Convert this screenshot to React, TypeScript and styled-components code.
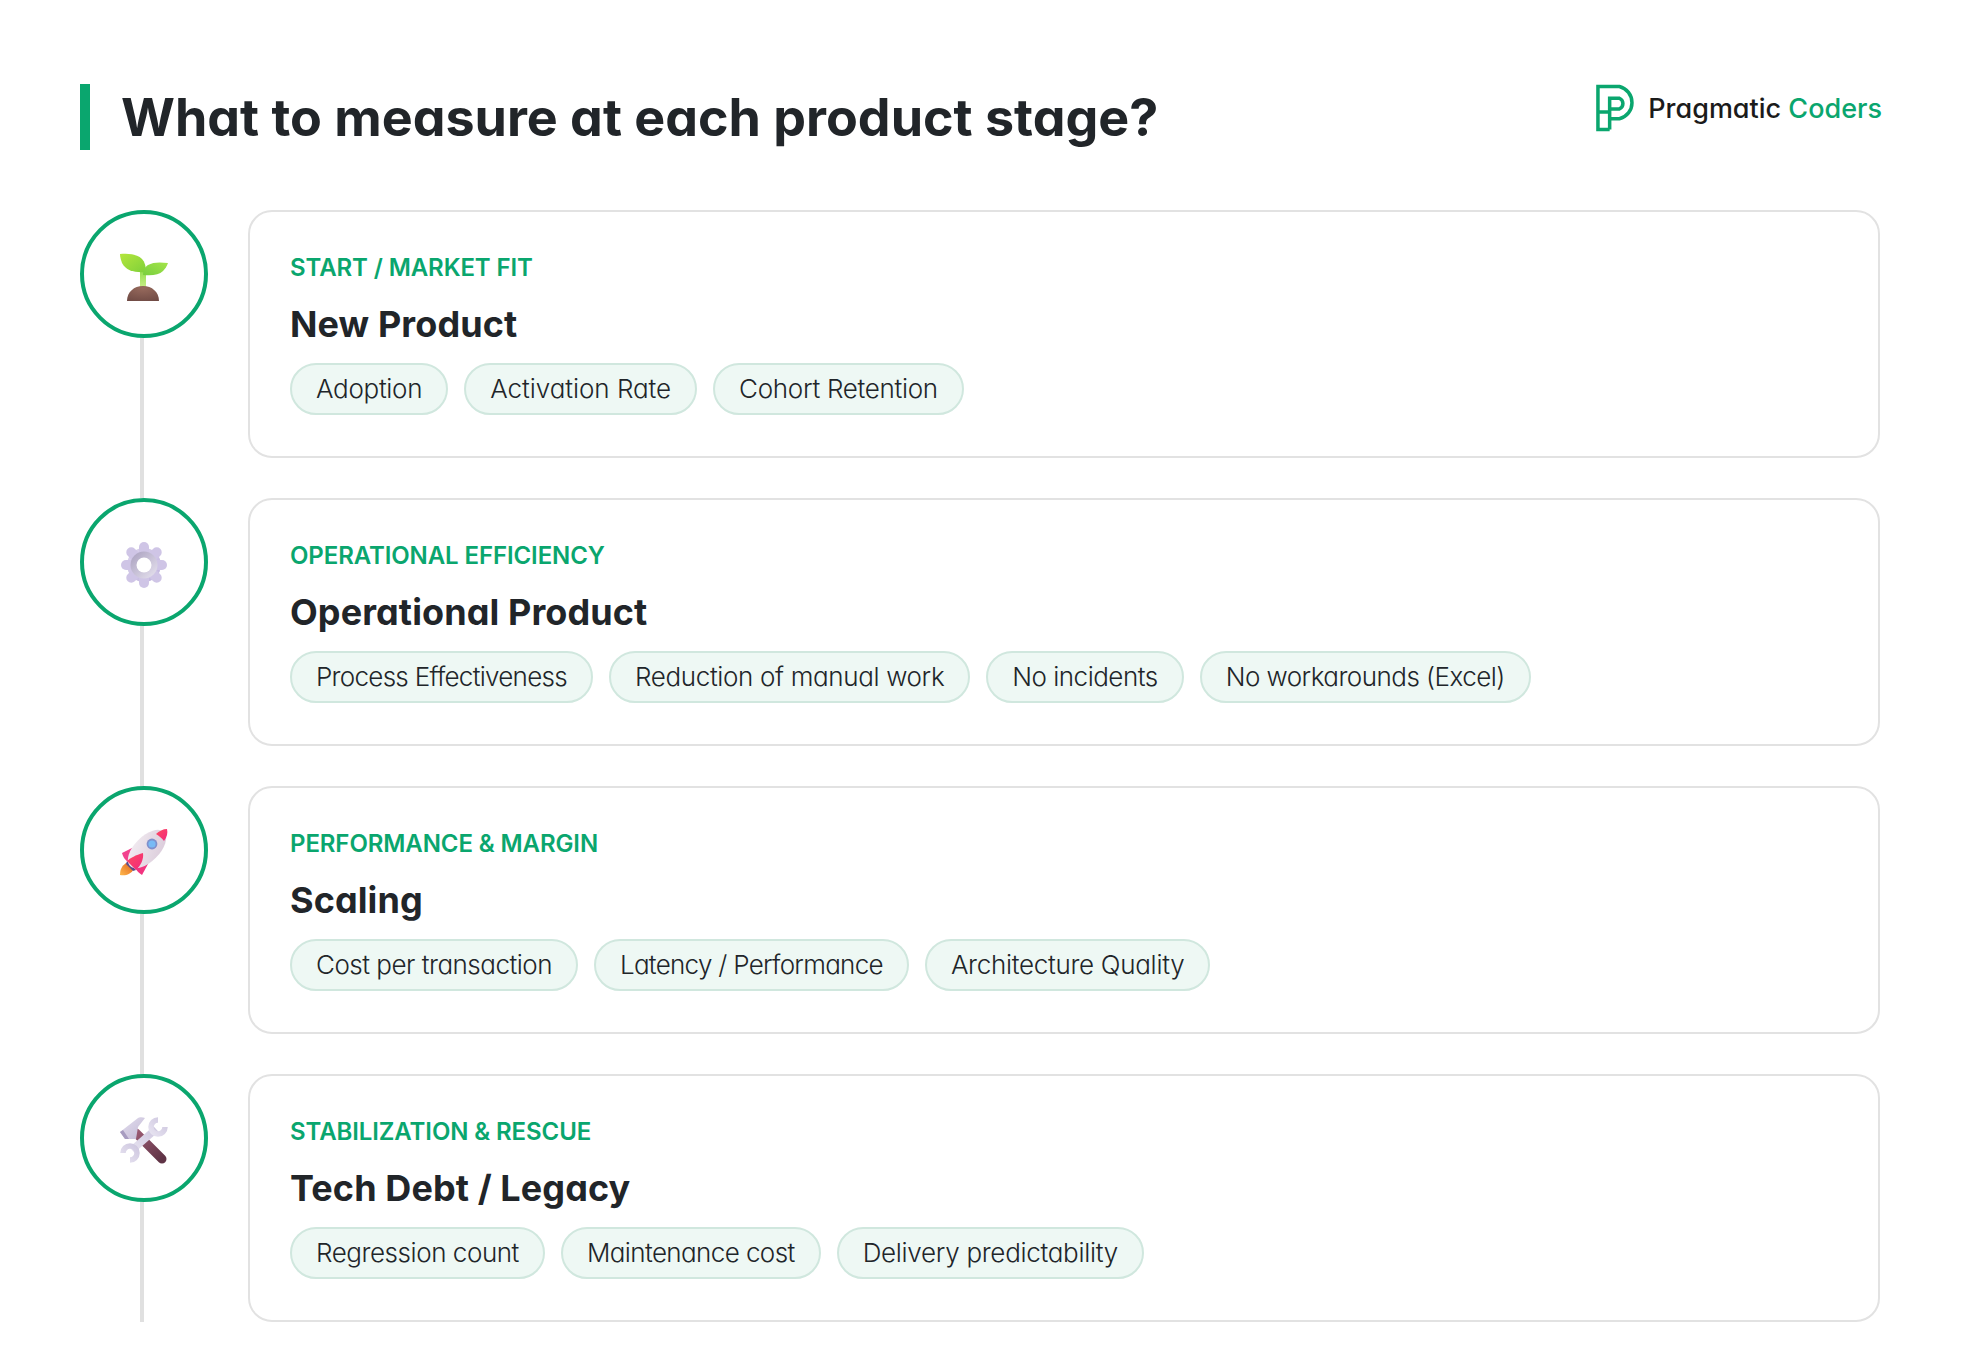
import React from 'react';
import styled, { createGlobalStyle } from 'styled-components';

const Global = createGlobalStyle`
  html, body { margin: 0; padding: 0; background: #fff; }
  body { font-family: "Inter", "Lato", sans-serif; font-feature-settings: "cv11" 1; color: #1f2326; }
`;

const Page = styled.div`
  width: 1962px;
  height: 1372px;
  box-sizing: border-box;
  padding: 84px 82px 50px 80px;
`;

const Header = styled.header`
  display: flex;
  justify-content: space-between;
  align-items: flex-start;
  margin-bottom: 60px;
`;

const Title = styled.h1`
  margin: 0;
  height: 66px;
  box-sizing: border-box;
  border-left: 10px solid #0aa66e;
  padding-left: 31px;
  font-size: 52px;
  line-height: 68px;
  font-weight: 700;
  color: #212529;
`;

const Logo = styled.div`
  display: flex;
  align-items: center;
  gap: 13px;
  height: 48px;
  margin-right: -2px;
`;

const LogoText = styled.div`
  font-size: 27px;
  font-weight: 500;
  color: #1b1b1b;
  white-space: nowrap;
  span { color: #0aa66e; }
`;

const Row = styled.section`
  display: flex;
`;

const Rail = styled.div`
  width: 168px;
  flex: none;
  display: flex;
  flex-direction: column;
`;

const Circle = styled.div`
  width: 128px;
  height: 128px;
  box-sizing: border-box;
  border: 4px solid #0aa66e;
  border-radius: 50%;
  padding-top: 5px;
  display: flex;
  align-items: center;
  justify-content: center;
  flex: none;
`;

const Connector = styled.div`
  width: 4px;
  flex: 1;
  margin-left: 60px;
  background: #e0e0e0;
`;

const Card = styled.article<{ $last?: boolean }>`
  flex: 1;
  height: 248px;
  box-sizing: border-box;
  margin-bottom: ${(p) => (p.$last ? 0 : 40)}px;
  border: 2px solid #e2e2e2;
  border-radius: 24px;
  padding: 41px 40px 0;
`;

const Eyebrow = styled.div`
  font-size: 24px;
  line-height: 30px;
  font-weight: 600;
  color: #0aa66e;
  letter-spacing: -0.1px;
`;

const CardTitle = styled.h2`
  margin: 18px 0 0;
  font-size: 36px;
  line-height: 46px;
  font-weight: 700;
  color: #212529;
  letter-spacing: 0.1px;
`;

const Chips = styled.div`
  display: flex;
  gap: 16px;
  margin-top: 16px;
`;

const Chip = styled.span<{ $track: number }>`
  height: 52px;
  box-sizing: border-box;
  padding: 0 24px;
  border: 2px solid #d0e7de;
  border-radius: 26px;
  background: #eef8f4;
  font-size: 26px;
  line-height: 48px;
  font-weight: 350;
  color: #212529;
  white-space: nowrap;
  letter-spacing: ${(p) => p.$track}px;
`;

const Seedling = () => (
  <svg width="48" height="48" viewBox="0 0 48 48">
    <defs>
      <linearGradient id="sl" x1="0" y1="0" x2="1" y2="1"><stop offset="0" stopColor="#b4e63c" /><stop offset="1" stopColor="#7fd03a" /></linearGradient>
      <linearGradient id="sr" x1="1" y1="0" x2="0" y2="1"><stop offset="0" stopColor="#a4e44a" /><stop offset="1" stopColor="#78cf3e" /></linearGradient>
      <linearGradient id="ss" x1="0" y1="0" x2="0" y2="1"><stop offset="0" stopColor="#8ddc46" /><stop offset="1" stopColor="#cdf08c" /></linearGradient>
      <radialGradient id="sd" cx=".5" cy=".15" r=".95"><stop offset="0" stopColor="#96695c" /><stop offset="1" stopColor="#6f4a44" /></radialGradient>
    </defs>
    <path d="M20 16v20h6V16z" fill="url(#ss)" />
    <path d="M0 1c8-1 17 0 22 5 3 3 4 8 4 13C16 20 6 18 2 10 1 7 0 4 0 1z" fill="url(#sl)" />
    <path d="M48 10c-8-1-15-1-20 2-3 2-5 5-5 10 9 1 16 0 20-4 2-2 4-5 5-8z" fill="url(#sr)" />
    <path d="M7 48c0-9 7-15 16-15s16 6 16 15z" fill="url(#sd)" />
  </svg>
);

const Gear = () => {
  const teeth = [0, 45, 90, 135, 180, 225, 270, 315];
  return (
    <svg width="48" height="48" viewBox="0 0 48 48">
      <defs>
        <linearGradient id="gb" x1="0" y1="0" x2="1" y2="1"><stop offset="0" stopColor="#dcd4ec" /><stop offset="1" stopColor="#c0b4de" /></linearGradient>
        <linearGradient id="gr" x1="0" y1="0" x2="1" y2="1"><stop offset="0" stopColor="#a89fbe" /><stop offset="1" stopColor="#e8e4f0" /></linearGradient>
      </defs>
      <circle cx="24" cy="24" r="17" fill="url(#gb)" />
      {teeth.map((a) => (
        <rect key={a} x="19" y="1" width="10" height="16" rx="5" fill="#cfc5e6" transform={`rotate(${a} 24 24)`} />
      ))}
      <circle cx="24" cy="24" r="13.5" fill="url(#gr)" />
      <circle cx="24" cy="24" r="7.5" fill="#fff" />
    </svg>
  );
};

const Rocket = () => (
  <svg width="48" height="48" viewBox="0 0 48 48">
    <defs>
      <linearGradient id="rb" x1="0" y1="0" x2="1" y2="1"><stop offset="0" stopColor="#f5f0f4" /><stop offset="1" stopColor="#d8c8d8" /></linearGradient>
      <linearGradient id="rr" x1="0" y1="0" x2="1" y2="1"><stop offset="0" stopColor="#ff4a5e" /><stop offset="1" stopColor="#f0287e" /></linearGradient>
      <linearGradient id="rf" x1="1" y1="0" x2="0" y2="1"><stop offset="0" stopColor="#e0641e" /><stop offset="1" stopColor="#ffb84c" /></linearGradient>
    </defs>
    <path d="M0 46C0 40 2 37 6 34l7 7c-2 4-7 6-13 5z" fill="url(#rf)" />
    <path d="M7 32l9 9-3 1-7-7z" fill="#5b4a8a" />
    <path d="M2 24l10-5 4 5-8 9c-3-2-5-5-6-9z" fill="#f2438e" />
    <path d="M22 46l6-11-4-5-9 9c2 3 4 5 7 7z" fill="#f2337f" />
    <ellipse cx="27" cy="20" rx="24" ry="12.5" fill="url(#rb)" transform="rotate(-45 27 20)" />
    <path d="M36 5c3-3 7-5 11-5 1 4 0 8-3 12-2-3-5-5-8-7z" fill="url(#rr)" />
    <path d="M23 24C16 26 10 29 7 32l9 9c4-4 8-10 7-17z" fill="url(#rr)" />
    <circle cx="32" cy="15" r="5.4" fill="#7f90cc" />
    <circle cx="32" cy="15" r="3.6" fill="#78baf5" />
  </svg>
);

const Tools = () => (
  <svg width="48" height="48" viewBox="0 0 48 48" fill="none">
    <defs>
      <linearGradient id="th" x1="0" y1="0" x2="1" y2="1"><stop offset="0" stopColor="#9a5a72" /><stop offset="1" stopColor="#5f3345" /></linearGradient>
      <linearGradient id="tm" x1="0" y1="0" x2="1" y2="1"><stop offset="0" stopColor="#e3deee" /><stop offset="1" stopColor="#c3bad6" /></linearGradient>
      <linearGradient id="tw" x1="0" y1="1" x2="1" y2="0"><stop offset="0" stopColor="#e6e2f0" /><stop offset="1" stopColor="#cfc8e0" /></linearGradient>
    </defs>
    <path d="M16 16 42 42" stroke="url(#th)" strokeWidth="9" strokeLinecap="round" />
    <path d="M0 15 18 1c1-1 5-1 7 0l-7 9-2 12H5z" fill="url(#tm)" />
    <path d="M0 15l5 7h4L3 13z" fill="#a79cc0" />
    <path d="M12 33 36 12" stroke="url(#tw)" strokeWidth="7.5" />
    <path d="M45 10A7 7 0 1 1 38 3" stroke="url(#tw)" strokeWidth="5.5" />
    <path d="M3 36A7 7 0 1 1 10 43" stroke="url(#tw)" strokeWidth="5.5" />
  </svg>
);

const Mark = () => (
  <svg width="39" height="48" viewBox="0 0 40 48" fill="none" stroke="#0aa66e" strokeWidth="3.6">
    <path d="M2 28V2h22a17 17 0 0 1 0 33h-10" />
    <path d="M14 46V14h10a6 6 0 0 1 0 11H14" />
    <path d="M2 28h12M2 28v18h12" />
  </svg>
);

const stages = [
  { label: 'START / MARKET FIT', title: 'New Product', icon: <Seedling />, chips: [['Adoption', -0.3], ['Activation Rate', -0.05], ['Cohort Retention', -0.3]] },
  { label: 'OPERATIONAL EFFICIENCY', title: 'Operational Product', icon: <Gear />, chips: [['Process Effectiveness', -0.72], ['Reduction of manual work', -0.35], ['No incidents', -0.5], ['No workarounds (Excel)', -0.53]] },
  { label: 'PERFORMANCE & MARGIN', title: 'Scaling', icon: <Rocket />, chips: [['Cost per transaction', -0.5], ['Latency / Performance', -0.72], ['Architecture Quality', -0.3]] },
  { label: 'STABILIZATION & RESCUE', title: 'Tech Debt / Legacy', icon: <Tools />, chips: [['Regression count', -0.45], ['Maintenance cost', -0.6], ['Delivery predictability', -0.3]] },
] as { label: string; title: string; icon: React.ReactNode; chips: [string, number][] }[];

export default function App() {
  return (
    <Page>
      <Global />
      <Header>
        <Title>What to measure at each product stage?</Title>
        <Logo>
          <Mark />
          <LogoText>Pragmatic <span>Coders</span></LogoText>
        </Logo>
      </Header>
      {stages.map((s, i) => (
        <Row key={s.title}>
          <Rail>
            <Circle>{s.icon}</Circle>
            <Connector />
          </Rail>
          <Card $last={i === stages.length - 1}>
            <Eyebrow>{s.label}</Eyebrow>
            <CardTitle>{s.title}</CardTitle>
            <Chips>
              {s.chips.map(([c, k]) => <Chip key={c} $track={k}>{c}</Chip>)}
            </Chips>
          </Card>
        </Row>
      ))}
    </Page>
  );
}
